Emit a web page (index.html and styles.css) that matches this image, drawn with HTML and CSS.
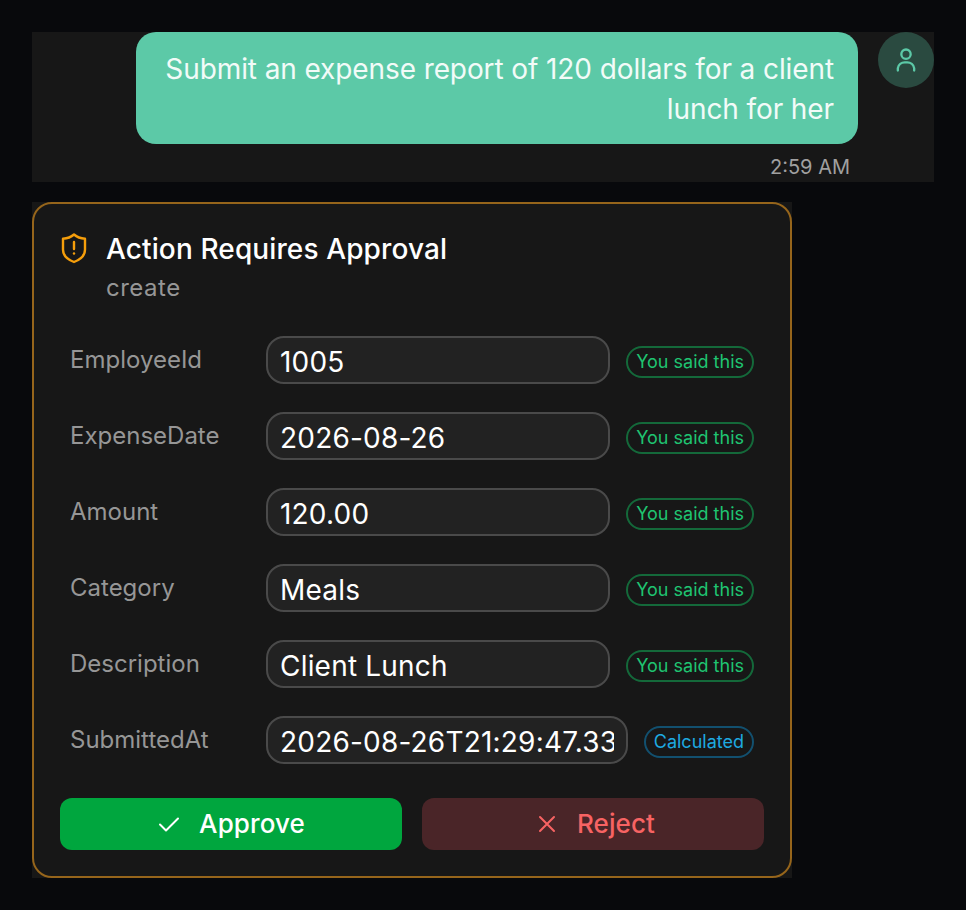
FILE: index.html
```html
<!DOCTYPE html>
<html>
    <head>
        <title>Action Requires Approval</title>
        <link rel="stylesheet" href="styles.css">
    </head>
    <body>
        <div class="message">
            <div class="messageBody">
                <div class="bubble">Submit an expense report of 120 dollars for a client lunch for her</div>
                <div class="time">2:59 AM</div>
            </div>
            <div class="avatar">
                <svg width="28" height="28" viewBox="0 0 24 24" fill="none" stroke="currentColor" stroke-width="2" stroke-linecap="round" stroke-linejoin="round">
                    <circle cx="12" cy="7" r="4"></circle>
                    <path d="M5 21v-2a6 6 0 0 1 6-5h2a6 6 0 0 1 6 5v2"></path>
                </svg>
            </div>
        </div>
        <div class="cardWrap">
            <div class="card">
                <div class="cardHeader">
                    <svg class="shield" width="28" height="32" viewBox="0 0 28 32" fill="none" stroke="currentColor" stroke-width="2.4" stroke-linecap="round" stroke-linejoin="round">
                        <path d="M14 2.500c3 2.600 6.400 3.900 11 4.300v11c0 5.500-4.200 9.600-11 12.200C7.200 27.400 3 23.300 3 17.800v-11c4.600-.4 8-1.700 11-4.300z"></path>
                        <path d="M14 10v7"></path>
                        <path d="M14 21.500v.1"></path>
                    </svg>
                    <div>
                        <div class="cardTitle">Action Requires Approval</div>
                        <div class="cardSub">create</div>
                    </div>
                </div>
                <div class="fields">
                    <div class="field">
                        <label class="fieldLabel">EmployeeId</label>
                        <input class="fieldInput" type="text" value="1005" readonly>
                        <span class="tag said">You said this</span>
                    </div>
                    <div class="field">
                        <label class="fieldLabel">ExpenseDate</label>
                        <input class="fieldInput" type="text" value="2026-08-26" readonly>
                        <span class="tag said">You said this</span>
                    </div>
                    <div class="field">
                        <label class="fieldLabel">Amount</label>
                        <input class="fieldInput" type="text" value="120.00" readonly>
                        <span class="tag said">You said this</span>
                    </div>
                    <div class="field">
                        <label class="fieldLabel">Category</label>
                        <input class="fieldInput" type="text" value="Meals" readonly>
                        <span class="tag said">You said this</span>
                    </div>
                    <div class="field">
                        <label class="fieldLabel">Description</label>
                        <input class="fieldInput" type="text" value="Client Lunch" readonly>
                        <span class="tag said">You said this</span>
                    </div>
                    <div class="field">
                        <label class="fieldLabel">SubmittedAt</label>
                        <input class="fieldInput" type="text" value="2026-08-26T21:29:47.330Z" readonly>
                        <span class="tag calc">Calculated</span>
                    </div>
                </div>
                <div class="actions">
                    <button class="button approve">
                        <svg width="24" height="24" viewBox="0 0 24 24" fill="none" stroke="currentColor" stroke-width="2" stroke-linecap="round" stroke-linejoin="round"><path d="M3 12.500l6 6L21 6.500"></path></svg>
                        <span>Approve</span>
                    </button>
                    <button class="button reject">
                        <svg width="24" height="24" viewBox="0 0 24 24" fill="none" stroke="currentColor" stroke-width="2" stroke-linecap="round" stroke-linejoin="round"><path d="M5 5l14 14M19 5L5 19"></path></svg>
                        <span>Reject</span>
                    </button>
                </div>
            </div>
        </div>
    </body>
</html>
```

FILE: styles.css
```css
* {
    margin: 0;
    box-sizing: border-box;
}

body {
    background: #08090c;
    color: white;
    font-family: Inter, "Liberation Sans", sans-serif;
    padding: 32px 32px 0 32px;
}

.message {
    display: flex;
    justify-content: flex-end;
    gap: 20px;
    background: #171717;
    height: 150px;
}

.messageBody {
    width: 722px;
}

.bubble {
    background: #5cc9a7;
    border-radius: 20px;
    padding: 17px 24px 15px 24px;
    height: 112px;
    font-size: 28px;
    letter-spacing: -0.1px;
    line-height: 40px;
    text-align: right;
    color: #f2fbf8;
}

.time {
    margin-top: 11px;
    padding-right: 8px;
    font-size: 20px;
    line-height: 24px;
    text-align: right;
    color: #a0a0a0;
}

.avatar {
    width: 56px;
    height: 56px;
    border-radius: 50%;
    background: #2a4a40;
    color: #5cc9a7;
    display: flex;
    align-items: center;
    justify-content: center;
}

.cardWrap {
    width: 760px;
    margin-top: 20px;
    background: #171717;
}

.card {
    height: 676px;
    border: 2px solid #96651b;
    border-radius: 20px;
    padding: 26px;
}

.cardHeader {
    display: flex;
    gap: 18px;
    height: 106px;
}

.shield {
    color: #f59e0b;
    flex-shrink: 0;
    margin-top: 2px;
}

.cardTitle {
    margin-top: 1px;
    font-size: 28px;
    font-weight: 500;
    letter-spacing: 0.12px;
    line-height: 36px;
}

.cardSub {
    margin-top: 5px;
    font-size: 24px;
    letter-spacing: 0.5px;
    line-height: 32px;
    color: #969696;
}

.fields {
    display: flex;
    flex-direction: column;
    gap: 28px;
    padding: 0 10px;
}

.field {
    display: flex;
    align-items: center;
    gap: 16px;
    height: 48px;
}

.fieldLabel {
    width: 180px;
    flex-shrink: 0;
    margin-top: -1px;
    font-size: 24px;
    color: #969696;
}

.fieldInput {
    flex: 1;
    min-width: 0;
    height: 48px;
    background: #222222;
    border: 2px solid #4a4a4a;
    border-radius: 18px;
    padding: 4px 12px 0 12px;
    outline: 0;
    color: white;
    font-family: inherit;
    font-size: 28px;
    letter-spacing: 0.2px;
}

.tag {
    flex-shrink: 0;
    height: 32px;
    margin-top: 4px;
    padding: 0 8px;
    border-radius: 16px;
    font-size: 18px;
    line-height: 28px;
}

.said {
    border: 2px solid #14693a;
    color: #1fc471;
}

.calc {
    border: 2px solid #12506f;
    color: #1ea9e0;
}

.actions {
    display: flex;
    gap: 20px;
    margin-top: 34px;
}

.button {
    flex: 1;
    height: 52px;
    border: none;
    border-radius: 12px;
    display: flex;
    align-items: center;
    justify-content: center;
    gap: 18px;
    font-family: inherit;
    font-size: 26px;
    font-weight: 500;
    letter-spacing: 0.1px;
}

.button > span {
    margin-top: -2px;
}

.approve {
    background: #00a63e;
    color: white;
}

.reject {
    background: #4a2528;
    color: #f76363;
}

.reject > svg {
    margin-left: 4px;
}
```
